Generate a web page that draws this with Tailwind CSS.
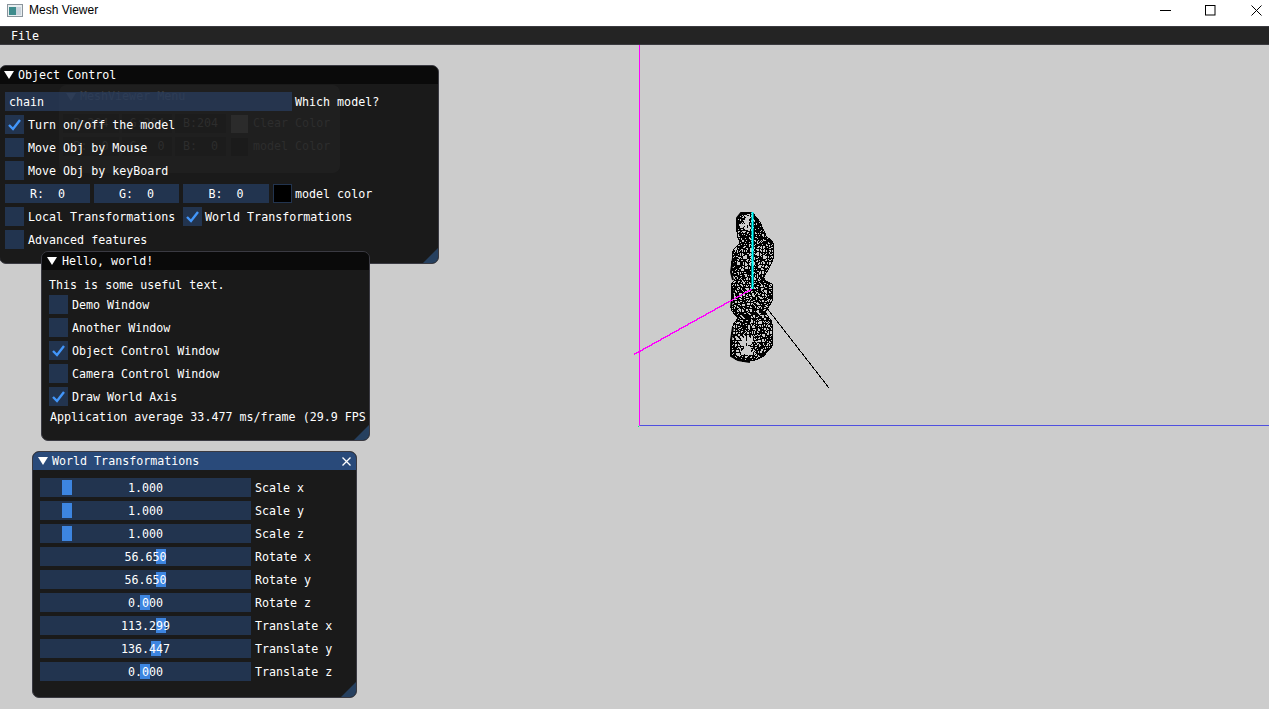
<!DOCTYPE html>
<html lang="en">
<head>
  <meta charset="UTF-8" />
  <title>Mesh Viewer</title>
  <script src="https://cdn.jsdelivr.net/npm/@tailwindcss/browser@4"></script>
</head>
<body class="relative h-[709px] w-[1269px] overflow-hidden bg-[#cccccc] font-['DejaVu_Sans_Mono','Liberation_Mono',monospace] text-[11.67px] leading-[13px] text-white">

  <!-- native title bar -->
  <div class="flex h-[26px] items-center bg-white pb-[6px] font-['Liberation_Sans',sans-serif] text-[12px] text-[#000]">
    <svg class="ml-[7px] mr-[6px] h-[13px] w-[16px]" viewBox="0 0 16 13">
      <rect x="0.5" y="0.5" width="15" height="12" fill="#e8eef0" stroke="#8a949c" />
      <rect x="2" y="3" width="7" height="8" fill="#3d8b8c" />
      <rect x="9" y="3" width="5" height="8" fill="#c9d3dc" />
    </svg>
    <span>Mesh Viewer</span>
    <div class="ml-auto flex h-full items-center">
      <svg class="mr-[34px] h-[11px] w-[11px]" viewBox="0 0 11 11"><path d="M0 5.5H11" stroke="#000" /></svg>
      <svg class="mr-[35px] h-[11px] w-[11px]" viewBox="0 0 11 11"><rect x="0.5" y="0.5" width="9.5" height="9.5" fill="none" stroke="#000" /></svg>
      <svg class="mr-[7px] h-[11px] w-[11px]" viewBox="0 0 11 11"><path d="M0.5 0.5L10.5 10.5M10.5 0.5L0.5 10.5" stroke="#000" /></svg>
    </div>
  </div>

  <!-- menu bar -->
  <div class="flex h-[19px] items-center border-y border-[#3a3a3f] bg-[#242424] pl-[11px] pt-[2px]">File</div>

  <!-- viewport: axes and wireframe -->
  <svg class="absolute left-0 top-0" width="1269" height="709" viewBox="0 0 1269 709">
    <path d="M639.5 45V425.5" stroke="#ff00ff" />
    <path d="M639.5 425.5H1269" stroke="#4f4fe0" />
    <rect x="638" y="426" width="1" height="1" fill="#00ff66" />
    <g id="mesh" fill="none" stroke="#000" stroke-width="1" shape-rendering="crispEdges"></g>
    <path d="M737 232V218L741 213H751M733 258L731 272L733 280M733 288L731 308M733 327L731 340V356L738 360L750 362" fill="none" stroke="#000" stroke-width="2" />
    <path d="M634 354.5L752 289" stroke="#ff00ff" stroke-width="1.3" shape-rendering="crispEdges" />
    <path d="M752.5 212V289" stroke="#00ffff" stroke-width="2" />
    <path d="M752 289L829 388" stroke="#000" shape-rendering="crispEdges" />
  </svg>

  <!-- Object Control, with the unfocused menu window showing through -->
  <section class="absolute left-[-1px] top-[65px] h-[199px] w-[440px] overflow-hidden rounded-[7px] border border-[#3a3a42] bg-[#1a1a1a]">
    <div class="flex h-[18px] items-center bg-[#0a0a0a] pl-[4px]">
      <svg class="mr-[4px] h-[8px] w-[10px]" viewBox="0 0 10 8"><path d="M0 0H10L5 8Z" fill="#fff" /></svg>Object Control
    </div>

    <div class="absolute left-[59px] top-[19px] h-[88px] w-[281px] whitespace-nowrap rounded-[7px] bg-[#1f1f1f] text-[#2d2d2d]">
      <div class="flex items-center pl-[7px] pt-[5px] text-[#3a3a3a]">
        <svg class="mr-[4px] h-[8px] w-[10px]" viewBox="0 0 10 8"><path d="M0 0H10L5 8Z" fill="#3a3a3a" /></svg>MeshViewer Menu
      </div>
      <div class="mt-[11px] flex h-[19px] items-center pl-[4px]">
        <span class="flex h-full w-[56px] items-center justify-center bg-[#1c1c1c]">R:204</span>
        <span class="ml-[3px] flex h-full w-[50px] items-center justify-center bg-[#1c1c1c]">G:204</span>
        <span class="ml-[3px] flex h-full w-[51px] items-center justify-center bg-[#1c1c1c]">B:204</span>
        <span class="ml-[5px] h-[18px] w-[17px] bg-[#2b2b2b]"></span>
        <span class="ml-[5px]">Clear Color</span>
      </div>
      <div class="mt-[4px] flex h-[19px] items-center pl-[4px]">
        <span class="flex h-full w-[56px] items-center justify-center bg-[#1c1c1c]">R:&nbsp;&nbsp;0</span>
        <span class="ml-[3px] flex h-full w-[50px] items-center justify-center bg-[#1c1c1c]">G:&nbsp;&nbsp;0</span>
        <span class="ml-[3px] flex h-full w-[51px] items-center justify-center bg-[#1c1c1c]">B:&nbsp;&nbsp;0</span>
        <span class="ml-[5px] h-[18px] w-[17px] bg-[#1b1b1b]"></span>
        <span class="ml-[5px]">model Color</span>
      </div>
    </div>

    <div class="relative flex flex-col gap-[4px] pl-[5px] pt-[8px]">
      <div class="flex h-[19px] items-center">
        <div class="flex h-full w-[287px] items-center bg-[#2a3e62]/70 pl-[4px] pt-[2px]">chain</div><span class="ml-[3px] pt-[2px]">Which model?</span>
      </div>
      <div class="flex h-[19px] items-center gap-[4px]">
        <div class="flex h-[19px] w-[19px] items-center justify-center bg-[#22344f]"><svg class="h-[13px] w-[13px]" viewBox="0 0 13 13"><path d="M1 7L5 11L12 2" fill="none" stroke="#4296fa" stroke-width="2.4" /></svg></div><span class="pt-[2px]">Turn on/off the model</span>
      </div>
      <div class="flex h-[19px] items-center gap-[4px]"><div class="h-[19px] w-[19px] bg-[#22344f]"></div><span class="pt-[2px]">Move Obj by Mouse</span></div>
      <div class="flex h-[19px] items-center gap-[4px]"><div class="h-[19px] w-[19px] bg-[#22344f]"></div><span class="pt-[2px]">Move Obj by keyBoard</span></div>
      <div class="flex h-[19px] items-center">
        <div class="flex h-full w-[85px] items-center justify-center bg-[#22344f] pt-[2px]">R:&nbsp;&nbsp;0</div>
        <div class="ml-[4px] flex h-full w-[85px] items-center justify-center bg-[#22344f] pt-[2px]">G:&nbsp;&nbsp;0</div>
        <div class="ml-[4px] flex h-full w-[86px] items-center justify-center bg-[#22344f] pt-[2px]">B:&nbsp;&nbsp;0</div>
        <div class="ml-[4px] h-[19px] w-[19px] border border-[#22344f] bg-black"></div>
        <span class="ml-[3px] pt-[2px]">model color</span>
      </div>
      <div class="flex h-[19px] items-center">
        <div class="h-[19px] w-[19px] bg-[#22344f]"></div><span class="ml-[4px] w-[155px] pt-[2px]">Local Transformations</span>
        <div class="flex h-[19px] w-[19px] items-center justify-center bg-[#22344f]"><svg class="h-[13px] w-[13px]" viewBox="0 0 13 13"><path d="M1 7L5 11L12 2" fill="none" stroke="#4296fa" stroke-width="2.4" /></svg></div><span class="ml-[3px] pt-[2px]">World Transformations</span>
      </div>
      <div class="flex h-[19px] items-center gap-[4px]"><div class="h-[19px] w-[19px] bg-[#22344f]"></div><span class="pt-[2px]">Advanced features</span></div>
    </div>
    <div class="absolute bottom-0 right-0 h-0 w-0 border-b-[15px] border-l-[15px] border-b-[#26405f] border-l-transparent"></div>
  </section>

  <!-- Hello, world! -->
  <section class="absolute left-[41px] top-[251px] h-[190px] w-[329px] overflow-hidden rounded-[7px] border border-[#3a3a42] bg-[#1a1a1a]">
    <div class="flex h-[18px] items-center bg-[#0a0a0a] pl-[5px]">
      <svg class="mr-[5px] h-[8px] w-[10px]" viewBox="0 0 10 8"><path d="M0 0H10L5 8Z" fill="#fff" /></svg>Hello, world!
    </div>
    <div class="flex flex-col pl-[7px]">
      <div class="mb-[3px] pt-[9px]">This is some useful text.</div>
      <div class="flex flex-col gap-[4px]">
        <div class="flex h-[19px] items-center gap-[4px]"><div class="h-[19px] w-[19px] bg-[#22344f]"></div><span class="pt-[2px]">Demo Window</span></div>
        <div class="flex h-[19px] items-center gap-[4px]"><div class="h-[19px] w-[19px] bg-[#22344f]"></div><span class="pt-[2px]">Another Window</span></div>
        <div class="flex h-[19px] items-center gap-[4px]"><div class="flex h-[19px] w-[19px] items-center justify-center bg-[#22344f]"><svg class="h-[13px] w-[13px]" viewBox="0 0 13 13"><path d="M1 7L5 11L12 2" fill="none" stroke="#4296fa" stroke-width="2.4" /></svg></div><span class="pt-[2px]">Object Control Window</span></div>
        <div class="flex h-[19px] items-center gap-[4px]"><div class="h-[19px] w-[19px] bg-[#22344f]"></div><span class="pt-[2px]">Camera Control Window</span></div>
        <div class="flex h-[19px] items-center gap-[4px]"><div class="flex h-[19px] w-[19px] items-center justify-center bg-[#22344f]"><svg class="h-[13px] w-[13px]" viewBox="0 0 13 13"><path d="M1 7L5 11L12 2" fill="none" stroke="#4296fa" stroke-width="2.4" /></svg></div><span class="pt-[2px]">Draw World Axis</span></div>
      </div>
      <div class="mt-[5px] whitespace-nowrap pl-[1px]">Application average 33.477 ms/frame (29.9 FPS</div>
    </div>
    <div class="absolute bottom-0 right-0 h-0 w-0 border-b-[15px] border-l-[15px] border-b-[#26405f] border-l-transparent"></div>
  </section>

  <!-- World Transformations -->
  <section class="absolute left-[32px] top-[451px] h-[247px] w-[325px] overflow-hidden rounded-[7px] border border-[#3a3a42] bg-[#1a1a1a]">
    <div class="flex h-[18px] items-center bg-[#294a7a] pl-[5px] pr-[5px]">
      <svg class="mr-[4px] h-[8px] w-[10px]" viewBox="0 0 10 8"><path d="M0 0H10L5 8Z" fill="#fff" /></svg>World Transformations
      <svg class="ml-auto h-[9px] w-[9px]" viewBox="0 0 9 9"><path d="M0.5 0.5L8.5 8.5M8.5 0.5L0.5 8.5" stroke="#fff" stroke-width="1.3" /></svg>
    </div>
    <div id="sliders" class="flex flex-col gap-[4px] pl-[7px] pt-[8px]"></div>
    <div class="absolute bottom-0 right-0 h-0 w-0 border-b-[15px] border-l-[15px] border-b-[#26405f] border-l-transparent"></div>
  </section>

  <script>
    const sliders = [
      ['1.000', 22, 'Scale x'], ['1.000', 22, 'Scale y'], ['1.000', 22, 'Scale z'],
      ['56.650', 116, 'Rotate x'], ['56.650', 116, 'Rotate y'], ['0.000', 100, 'Rotate z'],
      ['113.299', 116, 'Translate x'], ['136.447', 111, 'Translate y'], ['0.000', 100, 'Translate z']
    ];
    document.getElementById('sliders').innerHTML = sliders.map(([value, grab, label]) => `
      <div class="flex h-[19px] items-center">
        <div class="relative flex h-full w-[211px] items-center justify-center bg-[#22344f]">
          <div class="absolute top-[2px] h-[15px] w-[10px] bg-[#3d85e0]" style="left:${grab}px"></div>
          <span class="relative pt-[2px]">${value}</span>
        </div>
        <span class="ml-[4px] pt-[2px]">${label}</span>
      </div>`).join('');

    // wireframe chain: a warped grid filling the outline of the four links
    const left = [[212,745],[216,738],[235,737],[243,740],[250,733],[272,731],[278,736],[285,731],[310,731],[318,738],[325,733],[340,731],[358,732],[362,745]];
    const right = [[212,752],[222,760],[238,767],[241,773],[260,773],[270,768],[280,762],[282,772],[300,773],[312,765],[322,772],[345,773],[358,762],[362,745]];
    const at = (pts, y) => {
      for (let i = 1; i < pts.length; i++) {
        if (y <= pts[i][0]) {
          const t = (y - pts[i-1][0]) / (pts[i][0] - pts[i-1][0]);
          return pts[i-1][1] + (pts[i][1] - pts[i-1][1]) * t;
        }
      }
      return pts[pts.length-1][1];
    };
    let seed = 7;
    const rnd = () => (seed = (seed * 16807) % 2147483647) / 2147483647;
    const ns = 'http://www.w3.org/2000/svg';
    const mesh = document.getElementById('mesh');
    function addLine(a, b) {
      const l = document.createElementNS(ns, 'line');
      l.setAttribute('x1', a[0]); l.setAttribute('y1', a[1]);
      l.setAttribute('x2', b[0]); l.setAttribute('y2', b[1]);
      mesh.appendChild(l);
    }
    const rows = 48, cols = 14, grid = [];
    for (let i = 0; i <= rows; i++) {
      const y = 212 + 150 * i / rows;
      grid[i] = [];
      for (let j = 0; j <= cols; j++) {
        const edge = j === 0 || j === cols;
        const x = at(left, y) + (at(right, y) - at(left, y)) * j / cols + (edge ? 0 : (rnd() - 0.5) * 3);
        grid[i][j] = [x, Math.min(362, Math.max(212, y + (edge ? 0 : (rnd() - 0.5) * 3)))];
      }
    }
    // the ends of the chain are sparser than the middle
    const sparse = (p) => (p[1] < 232 && p[0] > 741 && p[0] < 750) || (p[1] > 336 && p[1] < 354 && p[0] > 737 && p[0] < 752);
    for (let i = 0; i <= rows; i++) {
      for (let j = 0; j <= cols; j++) {
        const p = grid[i][j];
        const keep = sparse(p) ? 0.75 : 0.05;
        if (j < cols && rnd() > keep) addLine(p, grid[i][j + 1]);
        if (i < rows && rnd() > keep) addLine(p, grid[i + 1][j]);
        if (i < rows && j < cols && rnd() > (sparse(p) ? 0.9 : 0.4)) addLine(p, grid[i + 1][j + 1]);
      }
    }
  </script>
</body>
</html>
